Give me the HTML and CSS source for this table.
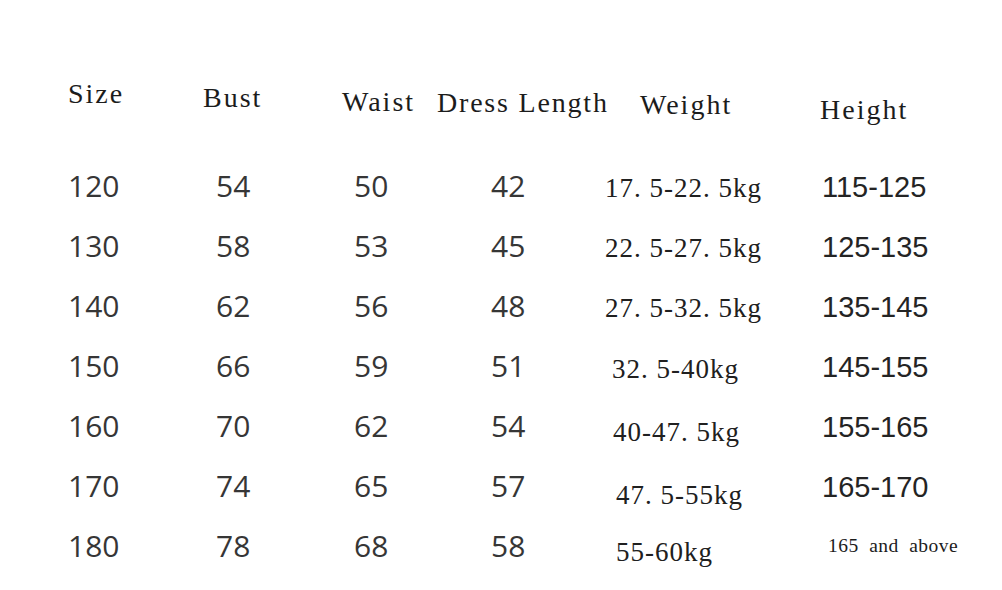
FILE: index.html
```html
<!DOCTYPE html>
<html lang="en">
<head>
<meta charset="utf-8">
<title>Size Chart</title>
<link rel="stylesheet" href="styles.css">
</head>
<body>
<main class="chart">
  <div class="head">
    <div class="h h-size">Size</div>
    <div class="h h-bust">Bust</div>
    <div class="h h-waist">Waist</div>
    <div class="h h-dress">Dress Length</div>
    <div class="h h-weight">Weight</div>
    <div class="h h-height">Height</div>
  </div>
  <div class="rows">
    <div class="num">120</div><div class="num">54</div><div class="num">50</div><div class="num">42</div><div class="wt">17. 5-22. 5kg</div><div class="ht">115-125</div>
    <div class="num">130</div><div class="num">58</div><div class="num">53</div><div class="num">45</div><div class="wt">22. 5-27. 5kg</div><div class="ht">125-135</div>
    <div class="num">140</div><div class="num">62</div><div class="num">56</div><div class="num">48</div><div class="wt">27. 5-32. 5kg</div><div class="ht">135-145</div>
    <div class="num">150</div><div class="num">66</div><div class="num">59</div><div class="num">51</div><div class="wt wt-in1"><span class="low1">32. 5-40kg</span></div><div class="ht">145-155</div>
    <div class="num">160</div><div class="num">70</div><div class="num">62</div><div class="num">54</div><div class="wt wt-in2"><span class="low4">40-47. 5kg</span></div><div class="ht">155-165</div>
    <div class="num">170</div><div class="num">74</div><div class="num">65</div><div class="num">57</div><div class="wt wt-in3"><span class="low7">47. 5-55kg</span></div><div class="ht">165-170</div>
    <div class="num">180</div><div class="num">78</div><div class="num">68</div><div class="num">58</div><div class="wt wt-in3"><span class="low4">55-60kg</span></div><div class="ht ht-small"><span class="up5">165 and above</span></div>
  </div>
</main>
</body>
</html>
```

FILE: styles.css
```css
html, body {
  margin: 0;
  padding: 0;
  background: #ffffff;
}

.chart {
  width: 1002px;
  height: 590px;
  padding-top: 78px;
  box-sizing: border-box;
  overflow: hidden;
}

.head {
  display: flex;
  align-items: flex-start;
  height: 78px;
  padding-left: 68px;
  font-family: "Liberation Serif", "Times New Roman", serif;
  font-size: 28px;
  line-height: 32px;
  letter-spacing: 2px;
  color: #1c1c1c;
}

.h-size   { width: 135px; }
.h-bust   { width: 139px; padding-top: 4px; }
.h-waist  { width: 95px;  padding-top: 8px; }
.h-dress  { width: 203px; padding-top: 9px; letter-spacing: 1.8px; }
.h-weight { width: 180px; padding-top: 11px; }
.h-height { padding-top: 16px; }

.rows {
  display: grid;
  grid-template-columns: 148px 138px 137px 114px 216px 1fr;
  grid-auto-rows: 60px;
  align-items: baseline;
  padding-left: 68px;
}

.num {
  font-family: "Open Sans", "Noto Sans", sans-serif;
  font-size: 30px;
  line-height: 60px;
  color: #363636;
}

.wt {
  font-family: "Liberation Serif", "Times New Roman", serif;
  font-size: 27px;
  line-height: 60px;
  letter-spacing: 1px;
  color: #202020;
}

.wt-in1 { padding-left: 7px; }
.wt-in2 { padding-left: 8px; }
.wt-in3 { padding-left: 11px; }

.low1 { vertical-align: -1px; }
.low4 { vertical-align: -4px; }
.low7 { vertical-align: -7px; }

.ht {
  font-family: "Liberation Sans", Arial, sans-serif;
  font-size: 29px;
  line-height: 60px;
  padding-left: 1px;
  color: #242424;
}

.ht-small {
  font-family: "Liberation Serif", "Times New Roman", serif;
  font-size: 19.5px;
  letter-spacing: 0.5px;
  word-spacing: 5px;
  padding-left: 7px;
  color: #1c1c1c;
}

.up5 { vertical-align: 5px; }
```
